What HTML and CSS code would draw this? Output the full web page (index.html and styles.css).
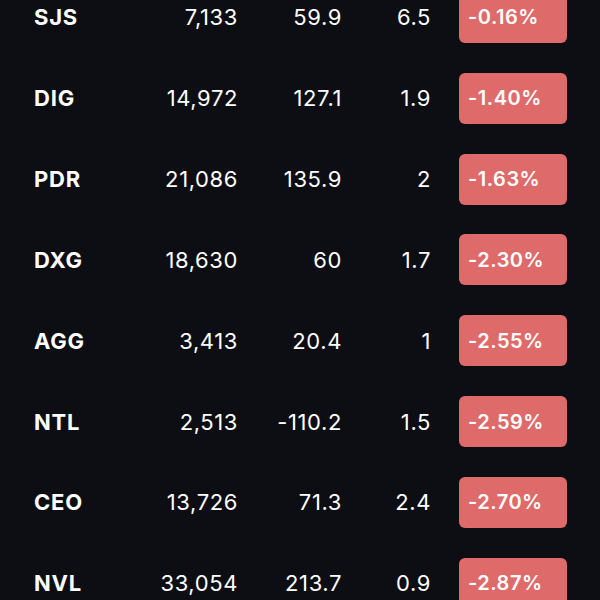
FILE: index.html
```html
<!DOCTYPE html>
<html>
<head>
<meta charset="utf-8">
<link rel="stylesheet" href="styles.css">
</head>
<body>
<div class="table">
  <div class="row"><span class="sym">SJS</span><span class="num">7,133</span><span class="num">59.9</span><span class="num">6.5</span><span class="badge">-0.16%</span></div>
  <div class="row"><span class="sym">DIG</span><span class="num">14,972</span><span class="num">127.1</span><span class="num">1.9</span><span class="badge">-1.40%</span></div>
  <div class="row"><span class="sym">PDR</span><span class="num">21,086</span><span class="num">135.9</span><span class="num">2</span><span class="badge">-1.63%</span></div>
  <div class="row"><span class="sym">DXG</span><span class="num">18,630</span><span class="num">60</span><span class="num">1.7</span><span class="badge">-2.30%</span></div>
  <div class="row"><span class="sym">AGG</span><span class="num">3,413</span><span class="num">20.4</span><span class="num">1</span><span class="badge">-2.55%</span></div>
  <div class="row"><span class="sym">NTL</span><span class="num">2,513</span><span class="num">-110.2</span><span class="num">1.5</span><span class="badge">-2.59%</span></div>
  <div class="row"><span class="sym">CEO</span><span class="num">13,726</span><span class="num">71.3</span><span class="num">2.4</span><span class="badge">-2.70%</span></div>
  <div class="row"><span class="sym">NVL</span><span class="num">33,054</span><span class="num">213.7</span><span class="num">0.9</span><span class="badge">-2.87%</span></div>
</div>
</body>
</html>
```
FILE: styles.css
```css
html, body {
  margin: 0;
  padding: 0;
  background: #0d0e13;
  height: 600px;
  overflow: hidden;
}
.table {
  margin-top: -23px;
  font-family: Inter, "Noto Sans", sans-serif;
  color: #ffffff;
}
.row {
  display: grid;
  grid-template-columns: 90px 114px 104px 89px 136px;
  align-items: center;
  height: 80.83px;
  padding-left: 34px;
}
.sym {
  font-size: 22px;
  font-weight: 700;
  letter-spacing: 0.8px;
}
.num {
  font-size: 22px;
  font-weight: 400;
  text-align: right;
  letter-spacing: 0.6px;
}
.badge {
  margin-left: 28px;
  width: 108px;
  height: 51px;
  box-sizing: border-box;
  padding-left: 9px;
  display: flex;
  align-items: center;
  background: #de6a6a;
  border-radius: 6px;
  font-size: 20px;
  font-weight: 600;
  letter-spacing: 0.5px;
}
```
